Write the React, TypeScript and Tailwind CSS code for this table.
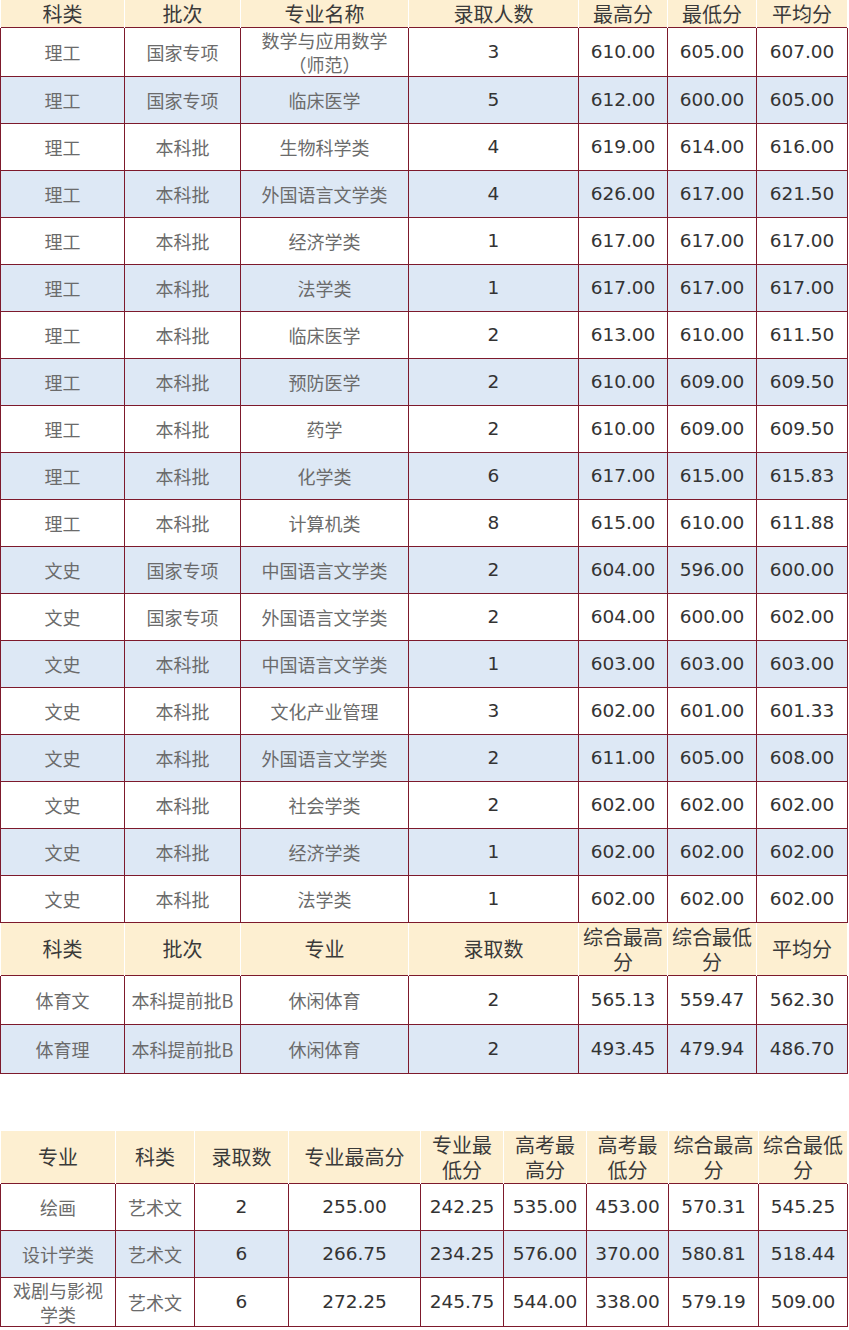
const maroon = 'border-[#7d1a2c]'

const main = [
  ['理工', '国家专项', '数学与应用数学\n（师范）', '3', '610.00', '605.00', '607.00'],
  ['理工', '国家专项', '临床医学', '5', '612.00', '600.00', '605.00'],
  ['理工', '本科批', '生物科学类', '4', '619.00', '614.00', '616.00'],
  ['理工', '本科批', '外国语言文学类', '4', '626.00', '617.00', '621.50'],
  ['理工', '本科批', '经济学类', '1', '617.00', '617.00', '617.00'],
  ['理工', '本科批', '法学类', '1', '617.00', '617.00', '617.00'],
  ['理工', '本科批', '临床医学', '2', '613.00', '610.00', '611.50'],
  ['理工', '本科批', '预防医学', '2', '610.00', '609.00', '609.50'],
  ['理工', '本科批', '药学', '2', '610.00', '609.00', '609.50'],
  ['理工', '本科批', '化学类', '6', '617.00', '615.00', '615.83'],
  ['理工', '本科批', '计算机类', '8', '615.00', '610.00', '611.88'],
  ['文史', '国家专项', '中国语言文学类', '2', '604.00', '596.00', '600.00'],
  ['文史', '国家专项', '外国语言文学类', '2', '604.00', '600.00', '602.00'],
  ['文史', '本科批', '中国语言文学类', '1', '603.00', '603.00', '603.00'],
  ['文史', '本科批', '文化产业管理', '3', '602.00', '601.00', '601.33'],
  ['文史', '本科批', '外国语言文学类', '2', '611.00', '605.00', '608.00'],
  ['文史', '本科批', '社会学类', '2', '602.00', '602.00', '602.00'],
  ['文史', '本科批', '经济学类', '1', '602.00', '602.00', '602.00'],
  ['文史', '本科批', '法学类', '1', '602.00', '602.00', '602.00'],
]

const sports = [
  ['体育文', '本科提前批B', '休闲体育', '2', '565.13', '559.47', '562.30'],
  ['体育理', '本科提前批B', '休闲体育', '2', '493.45', '479.94', '486.70'],
]

const art = [
  ['绘画', '艺术文', '2', '255.00', '242.25', '535.00', '453.00', '570.31', '545.25'],
  ['设计学类', '艺术文', '6', '266.75', '234.25', '576.00', '370.00', '580.81', '518.44'],
  ['戏剧与影视\n学类', '艺术文', '6', '272.25', '245.75', '544.00', '338.00', '579.19', '509.00'],
]

function Lines({ text }: { text: string }) {
  const parts = text.split('\n')
  return (
    <>
      {parts.map((p, i) => (
        <span key={i}>
          {i > 0 && <br />}
          {p}
        </span>
      ))}
    </>
  )
}

function HeadRow({ cells, h }: { cells: string[]; h: string }) {
  return (
    <tr className={`${h} bg-[#fdefd1]`}>
      {cells.map((c, i) => (
        <th
          key={i}
          className="border-x border-x-white border-y-0 p-0 text-center align-middle text-[20px] leading-[25px] font-normal text-[#3a3a3a] [font-family:'Noto_Sans_CJK_SC',sans-serif]"
        >
          <Lines text={c} />
        </th>
      ))}
    </tr>
  )
}

function BodyRow({ cells, blue, h = 'h-[47px]' }: { cells: string[]; blue: boolean; h?: string }) {
  return (
    <tr className={`${h} ${blue ? 'bg-[#dde8f5]' : 'bg-white'}`}>
      {cells.map((c, i) => {
        const num = /^[\d.]+$/.test(c)
        return (
          <td
            key={i}
            className={`border ${maroon} p-0 text-center align-middle leading-[24px] ${
              num
                ? "text-[18.5px] text-[#333] [font-family:'DejaVu_Sans',sans-serif]"
                : "text-[18px] text-[#6b6b6b] [font-family:'Noto_Sans_CJK_SC',sans-serif]"
            }`}
          >
            <Lines text={c} />
          </td>
        )
      })}
    </tr>
  )
}

export default function App() {
  return (
    <div className="min-h-screen w-[849px] bg-white">
      <table className="w-[847px] table-fixed border-collapse">
        <colgroup>
          <col className="w-[124px]" />
          <col className="w-[116px]" />
          <col className="w-[168px]" />
          <col className="w-[170px]" />
          <col className="w-[89px]" />
          <col className="w-[89px]" />
          <col className="w-[91px]" />
        </colgroup>
        <tbody>
          <HeadRow h="h-[27px]" cells={['科类', '批次', '专业名称', '录取人数', '最高分', '最低分', '平均分']} />
          {main.map((r, i) => (
            <BodyRow key={i} cells={r} blue={i % 2 === 1} />
          ))}
          <HeadRow
            h="h-[53px]"
            cells={['科类', '批次', '专业', '录取数', '综合最高\n分', '综合最低\n分', '平均分']}
          />
          {sports.map((r, i) => (
            <BodyRow key={i} cells={r} blue={i % 2 === 1} h="h-[49px]" />
          ))}
        </tbody>
      </table>

      <table className="mt-[57px] w-[847px] table-fixed border-collapse">
        <colgroup>
          <col className="w-[115px]" />
          <col className="w-[79px]" />
          <col className="w-[94px]" />
          <col className="w-[132px]" />
          <col className="w-[83px]" />
          <col className="w-[83px]" />
          <col className="w-[82px]" />
          <col className="w-[90px]" />
          <col className="w-[89px]" />
        </colgroup>
        <tbody>
          <HeadRow
            h="h-[53px]"
            cells={['专业', '科类', '录取数', '专业最高分', '专业最\n低分', '高考最\n高分', '高考最\n低分', '综合最高\n分', '综合最低\n分']}
          />
          {art.map((r, i) => (
            <BodyRow key={i} cells={r} blue={i % 2 === 1} />
          ))}
        </tbody>
      </table>
    </div>
  )
}
